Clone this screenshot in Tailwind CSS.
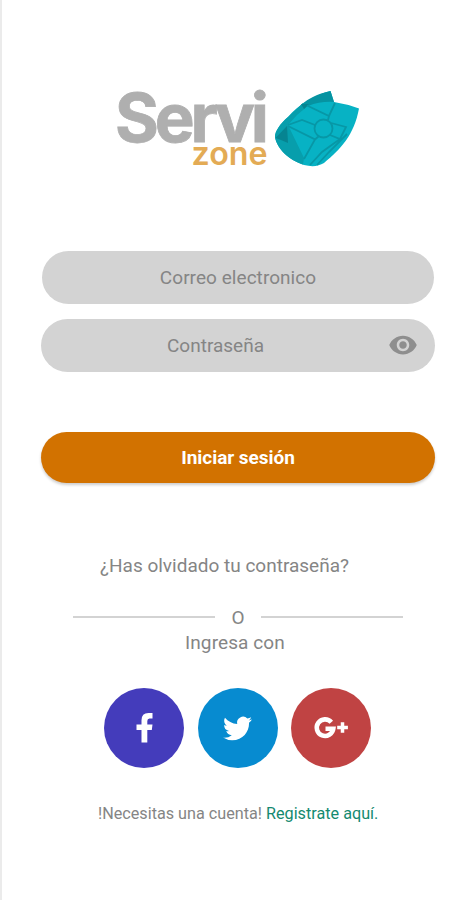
<!DOCTYPE html>
<html lang="es">
<head>
    <meta charset="UTF-8">
    <meta name="viewport" content="width=device-width, initial-scale=1.0">
    <title>Servizone</title>
    <script src="https://cdn.jsdelivr.net/npm/@tailwindcss/browser@4"></script>
</head>
<body class="bg-white font-['Roboto',sans-serif] text-[#858585]">

<main class="w-[475px] h-[900px] border-l-2 border-[#ebebeb] flex flex-col pl-[39px] pr-10 overflow-hidden">

    <!-- Logo -->
    <svg class="w-[250px] h-[80px] mt-[88px] ml-[72px] shrink-0 overflow-visible" viewBox="113 88 250 80" role="img" aria-label="Servi zone">
        <g font-family="Inter, sans-serif">
            <text x="115" y="141.800" font-size="67" font-weight="700" textLength="154" fill="#afafaf" stroke="#afafaf" stroke-width=".8">Servi</text>
            <text x="191.500" y="164.500" font-size="32" font-weight="600" textLength="76" lengthAdjust="spacingAndGlyphs" fill="#e3ab55">zone</text>
        </g>
        <path fill="#07b2c4" d="M330.500 91 C316 94 298 105 288 117 C280 124 275 131 275 137 C277 149 289 160 304 165 Q316 168 324 163 C341 149 354 135 359 108.500 Q347 104 334 102 Z"/>
        <path fill="#0693a1" d="M330.500 91 C317 94 308 99 302 104 L308 106 Q321 101 334 102 Z"/>
        <path fill="#079eac" d="M303 103 L288 117 C280 124 275 131 275 137 C277 149 289 160 303 164.500 L304 158 L288 125 L297 115 L309 105 Z"/>
        <path fill="#068491" d="M301 104 L309 104 L304 109 Z M287 126 L275.500 138 Q279 139 288 143 Z"/>
        <g fill="none" stroke="#0797a6" stroke-width="1.800">
            <circle cx="323.500" cy="128.500" r="9"/>
            <path d="M307 105.500 L329 116 L335 103 M288 125 L302 120 L315 125 M288 126 L315 139.500 L304 159 M315 139.500 L319 136 M331 123 L346 127 L340 139 L330 135 M329 116 L328 120 M340 139 L322 152 L310 165 M347 134 L329 152 L317 165"/>
        </g>
    </svg>

    <!-- Login form -->
    <form class="flex flex-col mt-[83px]">
        <div class="h-[53px] ml-px mr-px rounded-full bg-[#d3d3d3] flex items-center justify-center">
            <span class="text-[19px] leading-6 tracking-[0.05px]">Correo electronico</span>
        </div>
        <div class="h-[53px] mt-[15px] rounded-full bg-[#d3d3d3] flex items-center justify-between pl-[126px] pr-[17px]">
            <span class="text-[19px] leading-6">Contraseña</span>
            <svg class="w-[30px] h-[30px] mb-px" viewBox="0 0 24 24" fill="#8e8e8e">
                <path d="M12 4.500C7 4.500 2.730 7.610 1 12c1.730 4.390 6 7.500 11 7.500s9.270-3.110 11-7.500c-1.730-4.390-6-7.500-11-7.500zM12 17c-2.760 0-5-2.240-5-5s2.240-5 5-5 5 2.240 5 5-2.240 5-5 5zm0-8c-1.660 0-3 1.340-3 3s1.340 3 3 3 3-1.340 3-3-1.340-3-3-3z"/>
            </svg>
        </div>
        <button type="button" class="h-[51px] mt-[60px] pt-[2px] rounded-full bg-[#d27200] text-white text-[19px] font-bold tracking-[-0.05px] shadow-[0_2px_3px_rgba(0,0,0,0.2)]">Iniciar sesión</button>
    </form>

    <a class="mt-[71px] ml-[59px] text-[19px] leading-6 whitespace-nowrap">¿Has olvidado tu contraseña?</a>

    <!-- Separator -->
    <div class="flex items-center justify-between mt-7 ml-8 mr-8 h-6">
        <span class="w-[142px] h-[2px] mb-[2px] bg-[#d3d3d3]"></span>
        <span class="text-[19px] leading-6">O</span>
        <span class="w-[142px] h-[2px] mb-[2px] bg-[#d3d3d3]"></span>
    </div>
    <p class="mt-px ml-[144px] text-[19px] leading-6 tracking-[0.1px] whitespace-nowrap">Ingresa con</p>

    <!-- Social buttons -->
    <div class="flex ml-[63px] gap-[13.500px] mt-[33px]">
        <a class="w-20 h-20 rounded-full bg-[#443cbb] flex items-center justify-center">
            <svg class="w-20 h-20" viewBox="104 688 80 80" fill="#fff">
                <path d="M152.500 713v5.500h-3q-2.200 0-2.200 2.500v3.500h5.200l-.7 5.500h-4.500v12.500h-5.800v-12.500h-5v-5.500h5v-4.300q0-7.200 7-7.200z"/>
            </svg>
        </a>
        <a class="w-20 h-20 rounded-full bg-[#078bd0] flex items-center justify-center">
            <svg class="w-[29px] h-[29px]" viewBox="0 0 24 24" fill="#fff">
                <path d="M23.950 4.570a10 10 0 01-2.820.770 4.960 4.960 0 002.160-2.720c-.950.550-2 .960-3.130 1.180a4.920 4.920 0 00-8.380 4.480C7.690 8.090 4.070 6.130 1.640 3.160a4.820 4.820 0 00-.670 2.480c0 1.710.870 3.210 2.190 4.100a4.900 4.900 0 01-2.230-.620v.060a4.920 4.920 0 003.950 4.830 5 5 0 01-2.210.080 4.940 4.940 0 004.600 3.420A9.870 9.870 0 010 19.540a14 14 0 007.550 2.210c9.050 0 14-7.500 14-13.980 0-.210 0-.420-.020-.630a9.940 9.940 0 002.460-2.550z"/>
            </svg>
        </a>
        <a class="w-20 h-20 rounded-full bg-[#c04343] flex items-center justify-center">
            <svg class="w-20 h-20" viewBox="291 688 80 80" fill="none" stroke="#fff">
                <path stroke-width="4.600" d="M331.300 722.200A8.300 8.300 0 1 0 333.300 728.800H325.500"/>
                <path stroke-width="3.500" d="M342.500 722.300v10.500M337.200 727.500h10.700"/>
            </svg>
        </a>
    </div>

    <p class="mt-9 ml-[57px] text-[16.200px] leading-5 whitespace-nowrap">!Necesitas una cuenta! <a class="text-[#158a70]">Registrate aquí.</a></p>
</main>

</body>
</html>
